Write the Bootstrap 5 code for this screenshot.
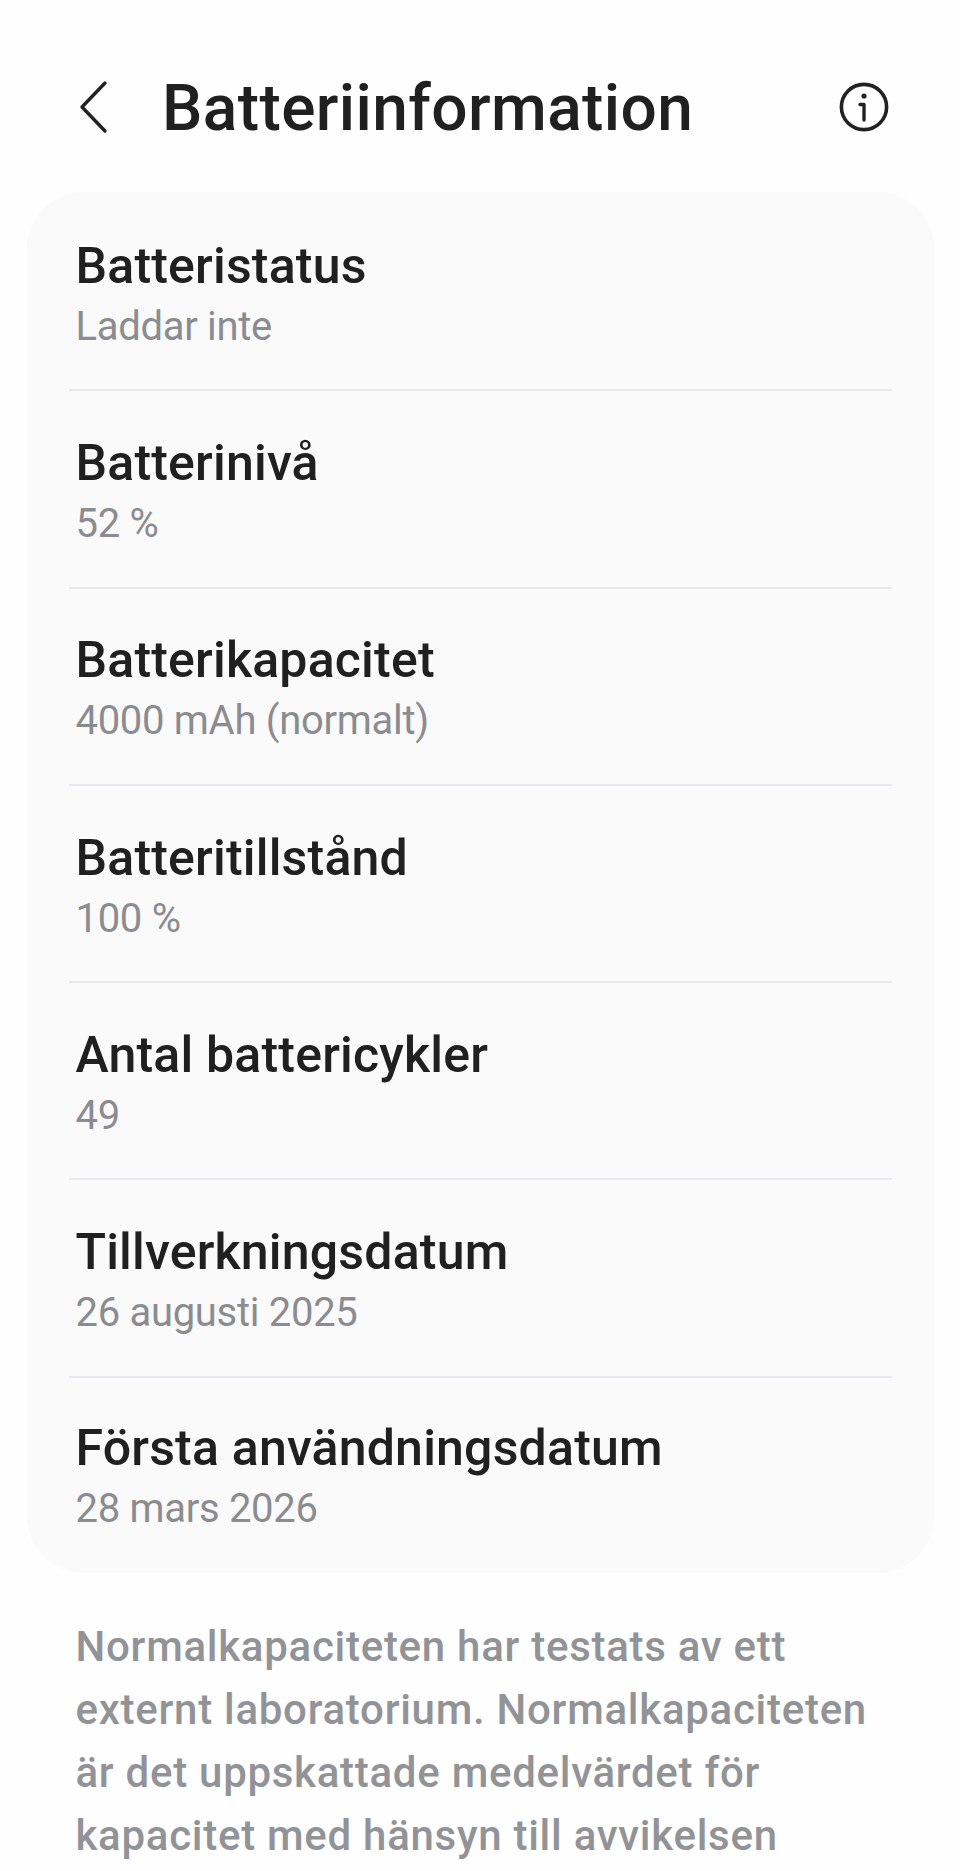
<!DOCTYPE html>
<html lang="sv">
<head>
<meta charset="utf-8">
<title>Batteriinformation</title>
<link href="https://cdn.jsdelivr.net/npm/bootstrap@5.3.0/dist/css/bootstrap.min.css" rel="stylesheet">
<style>
html,body{height:1871px;overflow:hidden;background:#fefefe;}
body{font-family:Roboto,"Noto Sans","Liberation Sans",sans-serif;color:#202020;}
.app-head{height:192px;padding:22px 66px 0 77px;}
.back-ico{width:34px;height:56px;flex:none;margin-right:51px;}
.head-title{font-size:64px;font-weight:500;line-height:1;margin:0;letter-spacing:.4px;padding-top:4px;}
.info-ico{width:60px;height:60px;flex:none;}
.info-panel{margin:0 26px 0 27px;background:#fafafb;border-radius:56px;padding:2px 42px 0;}
.info-row{height:197.3px;border-bottom:2px solid #e6e8ee;padding:5px 0 0 6.5px;}
.info-row:last-child{border-bottom:0;height:195.5px;padding-bottom:3.5px;}
.row-title{font-size:50px;font-weight:500;line-height:60px;letter-spacing:.2px;}
.row-sub{font-size:40px;line-height:52px;margin-top:5px;color:#8b8c90;letter-spacing:-.3px;}
.note-txt{margin:42px 30px 0 75.5px;font-size:42px;line-height:63px;color:#929397;font-weight:500;letter-spacing:.72px;}
</style>
</head>
<body>
<header class="app-head d-flex align-items-center justify-content-between">
  <div class="d-flex align-items-center">
    <svg class="back-ico" viewBox="0 0 34 56" fill="none" stroke="#222" stroke-width="3.4" stroke-linecap="round" stroke-linejoin="round"><path d="M28 4 5 28l23 24"/></svg>
    <h1 class="head-title">Batteriinformation</h1>
  </div>
  <svg class="info-ico" viewBox="0 0 60 60" fill="none" stroke="#222" stroke-linecap="round" stroke-linejoin="round"><circle cx="30" cy="30" r="22.6" stroke-width="3.6"/><circle cx="30" cy="19" r="2.6" fill="#222" stroke="none"/><path d="M26 27.5h4V43" stroke-width="3.4"/></svg>
</header>
<main class="info-panel">
  <div class="info-row d-flex flex-column justify-content-center"><div class="row-title">Batteristatus</div><div class="row-sub">Laddar inte</div></div>
  <div class="info-row d-flex flex-column justify-content-center"><div class="row-title">Batterinivå</div><div class="row-sub">52 %</div></div>
  <div class="info-row d-flex flex-column justify-content-center"><div class="row-title">Batterikapacitet</div><div class="row-sub">4000 mAh (normalt)</div></div>
  <div class="info-row d-flex flex-column justify-content-center"><div class="row-title">Batteritillstånd</div><div class="row-sub">100 %</div></div>
  <div class="info-row d-flex flex-column justify-content-center"><div class="row-title">Antal battericykler</div><div class="row-sub">49</div></div>
  <div class="info-row d-flex flex-column justify-content-center"><div class="row-title">Tillverkningsdatum</div><div class="row-sub">26 augusti 2025</div></div>
  <div class="info-row d-flex flex-column justify-content-center"><div class="row-title">Första användningsdatum</div><div class="row-sub">28 mars 2026</div></div>
</main>
<p class="note-txt">Normalkapaciteten har testats av ett<br>externt laboratorium. Normalkapaciteten<br>är det uppskattade medelvärdet för<br>kapacitet med hänsyn till avvikelsen</p>
<script src="https://cdn.jsdelivr.net/npm/bootstrap@5.3.0/dist/js/bootstrap.bundle.min.js"></script>
</body>
</html>
